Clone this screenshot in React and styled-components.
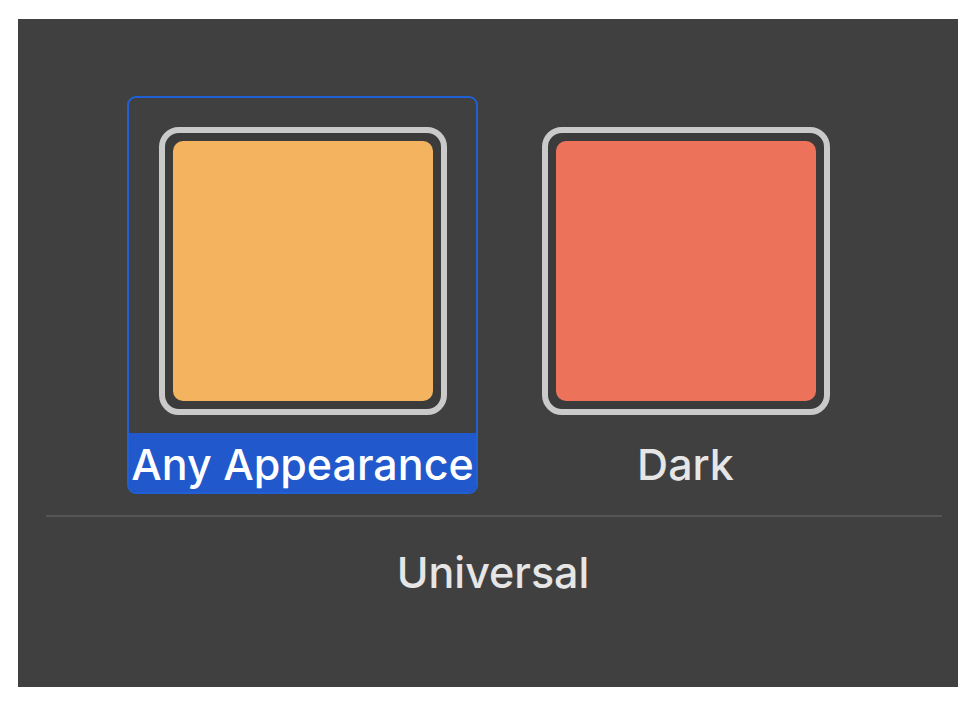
import React from "react";
import styled, { createGlobalStyle } from "styled-components";

const Global = createGlobalStyle`
  html, body { margin: 0; padding: 0; background: #ffffff; }
  body { font-family: Inter, "Noto Sans", "Liberation Sans", sans-serif; }
`;

const Panel = styled.div`
  margin: 19px 0 0 18px;
  width: 940px;
  height: 668px;
  background: #404040;
  box-sizing: border-box;
  padding-top: 77px;
  display: flex;
  flex-direction: column;
`;

const Row = styled.div`
  display: flex;
  gap: 32px;
  padding-left: 109px;
`;

const Item = styled.div`
  width: 351px;
  height: 398px;
  box-sizing: border-box;
  border: 2px solid ${(p) => (p.$selected ? "#2060d6" : "transparent")};
  border-radius: 9px;
  display: flex;
  flex-direction: column;
  align-items: center;
  padding-top: 29px;
  overflow: hidden;
`;

const Swatch = styled.div`
  width: 288px;
  height: 288px;
  box-sizing: border-box;
  border: 6px solid #cacaca;
  border-radius: 20px;
  padding: 8px;
  background: #3b3b3b;
  display: flex;
`;

const Fill = styled.div`
  flex: 1;
  border-radius: 10px;
  background: ${(p) => p.$color};
`;

const Label = styled.div`
  margin-top: 18px;
  align-self: stretch;
  flex: 1;
  background: ${(p) => (p.$selected ? "#2158cc" : "transparent")};
  color: ${(p) => (p.$selected ? "#ffffff" : "#e6e6e6")};
  font-size: 43px;
  font-weight: 500;
  line-height: 1;
  display: flex;
  align-items: center;
  justify-content: center;
  padding-top: 4px;
  white-space: nowrap;
`;

const Divider = styled.div`
  margin: 21px 16px 0 28px;
  height: 2px;
  background: #555555;
`;

const Footer = styled.div`
  margin-top: 34px;
  padding-left: 10px;
  text-align: center;
  color: #e6e6e6;
  font-size: 43px;
  font-weight: 500;
  line-height: 1;
`;

const items = [
  { label: "Any Appearance", color: "#f3b35f", selected: true },
  { label: "Dark", color: "#ec725a", selected: false },
];

export default function App() {
  return (
    <>
      <Global />
      <Panel>
        <Row>
          {items.map((it) => (
            <Item key={it.label} $selected={it.selected}>
              <Swatch>
                <Fill $color={it.color} />
              </Swatch>
              <Label $selected={it.selected}>{it.label}</Label>
            </Item>
          ))}
        </Row>
        <Divider />
        <Footer>Universal</Footer>
      </Panel>
    </>
  );
}
